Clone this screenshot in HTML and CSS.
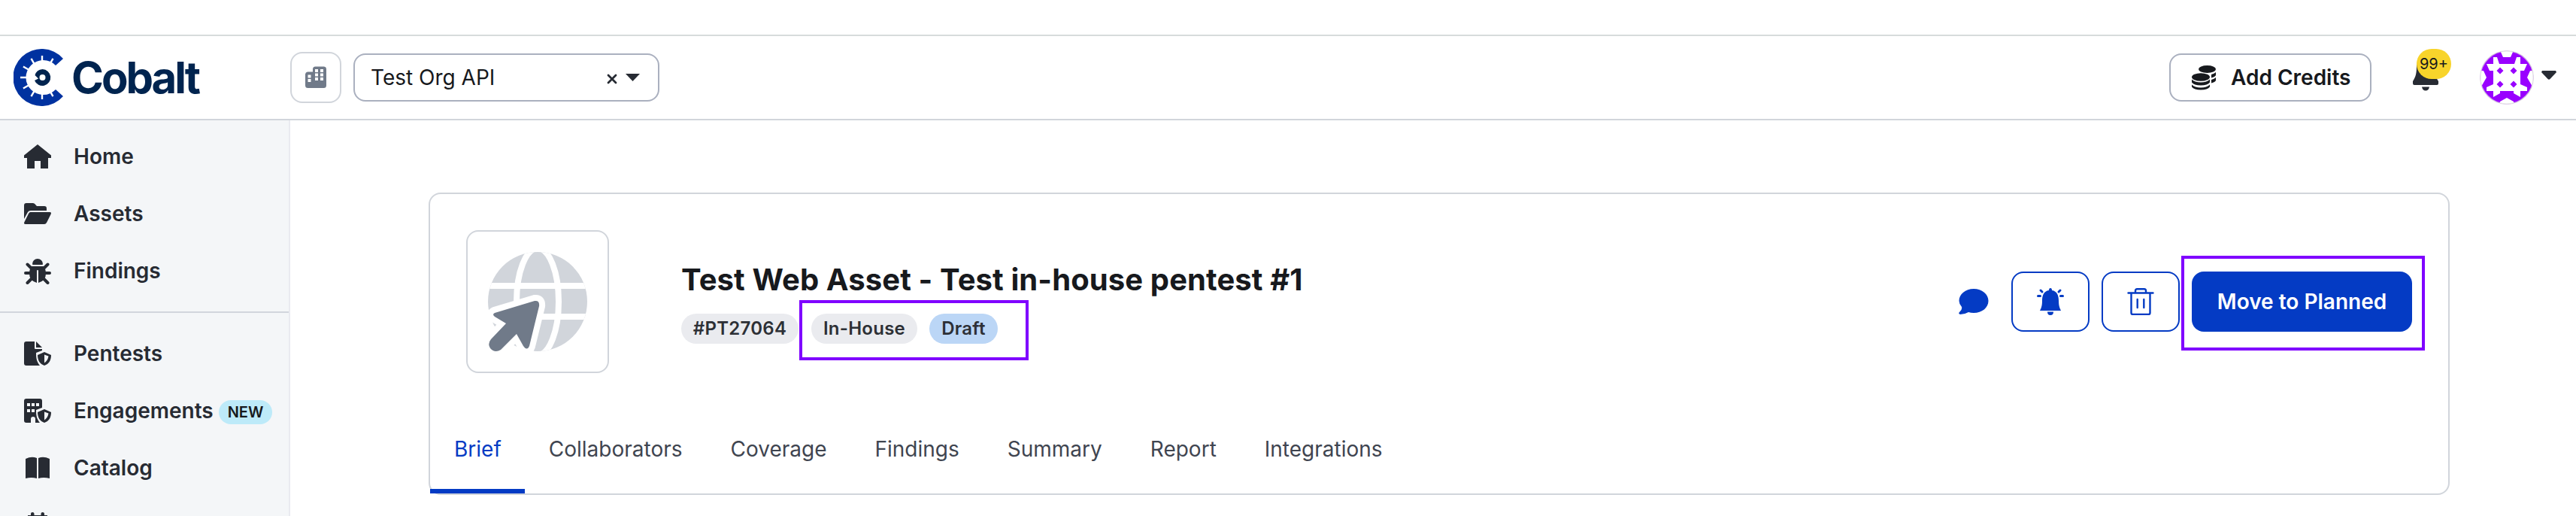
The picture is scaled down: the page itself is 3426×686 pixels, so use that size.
FILE: index.html
```html
<!DOCTYPE html>
<html lang="en">
<head>
<meta charset="utf-8">
<title>Cobalt</title>
<link rel="stylesheet" href="styles.css">
</head>
<body>
<header class="topbar">
  <a class="logo">
    <svg class="logo-mark" viewBox="0 0 76 76">
      <path d="M66 13A38 38 0 1 0 66 63L56 54A23 23 0 1 1 56 22Z" fill="#0032a0"/>
      <g stroke="#fff" stroke-width="2.4"><path d="M38 9v10M38 57v10M9 38h10M23.500 12.900l4 7M52.500 12.900l-4 7M12.900 23.500l7 4M12.900 52.500l7-4M23.500 63.100l4-7M52.500 63.100l-4-7"/></g>
      <path fill="#00244f" fill-rule="evenodd" d="M38.500 27a11 11 0 1 1-10.500 15l5-2.500-2.500-2.500-2-2A11 11 0 0 1 38.500 27Zm0 7a4 4 0 1 0 0 8 4 4 0 0 0 0-8Z"/>
    </svg>
    <span class="logo-text">Cobalt</span>
  </a>
  <div class="org-button">
    <svg width="30" height="30" viewBox="0 0 30 30"><path fill="#707a89" d="M4 7.500h7V4a3.500 3.500 0 0 1 3.500-3.500H26A3.500 3.500 0 0 1 29 4v21.500a3.500 3.500 0 0 1-3.500 3.500h-21A3.500 3.500 0 0 1 1 25.500v-15A3.500 3.500 0 0 1 4 7.500Z"/><path fill="#fff" d="M14 4h4v4h-4zM21 4h4v4h-4zM14 9.500h4v4h-4zM21 9.500h4v4h-4zM14 15h4v4h-4zM21 15h4v4h-4zM4.500 11.500h4v4h-4zM4.500 17h4v4h-4z"/></svg>
  </div>
  <div class="select">
    <span class="select-value">Test Org API</span>
    <svg class="select-clear" viewBox="0 0 14 14"><path d="M2 2l10 10M12 2L2 12" stroke="#272b33" stroke-width="2.800" stroke-linecap="round"/></svg>
    <svg class="select-caret" viewBox="0 0 19 10"><path d="M0 0h19L9.500 10z" fill="#272b33"/></svg>
  </div>
  <div class="credits">
    <svg width="32" height="34" viewBox="0 0 32 34" fill="#17191d"><ellipse cx="20.500" cy="6" rx="11.500" ry="5"/><path d="M26 13q4-1 6-3v4q-1 2-6 3.500zM26 20q4-1 6-3v4q-1 2-6 3.500z"/><ellipse cx="12" cy="16.500" rx="12" ry="5.300"/><path d="M0 19.500q4 4 12 4t12-4v4q-3 4-12 4t-12-4zM0 26.500q4 4 12 4t12-4v3q-3 4-12 4t-12-4z"/></svg>
    <span>Add Credits</span>
  </div>
  <div class="notif">
    <svg width="34" height="48" viewBox="0 0 34 48" fill="#272b33"><path d="M17 0c8 2 12 8 12 15 0 9 1 14 5 20v3q0 2-2 2H2q-2 0-2-2v-3C4 29 5 24 5 15 5 8 9 2 17 0ZM12 42.500h10q-1 5-5 5t-5-5Z"/></svg>
    <span class="notif-count">99+</span>
  </div>
  <svg class="avatar" viewBox="0 0 72 72">
    <defs><clipPath id="round"><circle cx="36" cy="36" r="35.500"/></clipPath></defs>
    <g clip-path="url(#round)">
      <path fill="#90f" d="M0 0h72v72H0z"/>
      <path fill="#fff" d="M9 18h9V9h5l3 9h20l3-9h5v9h9l-4 9h-5v18l9 4v5h-9v8l-9-5v-3H27v3l-9 5v-8H9v-5l9-4V27h-5z"/>
      <path fill="#fff" d="M27 0h18l-4 9H31zM26 72l1-4 9-5 9 5 1 4zM0 27h5l4 9-7 12H0zM72 27h-5l-4 9 7 12h2z"/>
      <path fill="#90f" d="M27 22.500l4.500 4.500-4.500 4.500-4.500-4.500zM45 22.500l4.500 4.500-4.500 4.500-4.500-4.500zM27 40.500l4.500 4.500-4.500 4.500-4.500-4.500zM45 40.500l4.500 4.500-4.500 4.500-4.500-4.500z"/>
    </g>
    <circle cx="36" cy="36" r="35.200" fill="none" stroke="#ddd" stroke-opacity=".7" stroke-width="1.500"/>
  </svg>
  <svg class="user-caret" viewBox="0 0 20 12"><path d="M1 0h18l1 2-8.500 9q-1.500 1.500-3 0L0 2z" fill="#272b33"/></svg>
</header>
<div class="body">
  <nav class="sidebar">
    <div class="nav-group">
      <a class="nav-item"><svg class="nav-icon" viewBox="0 0 36 36"><path d="M18 2L36 16.500V20h-4v14H22V24h-8v10H4V20H0v-3.500z"/></svg><span>Home</span></a>
      <a class="nav-item"><svg class="nav-icon" viewBox="0 0 36 36"><path d="M0 25V7q0-3 3-3h9q2 0 4 3l1 1h10q3 0 3 3v3H9q-3 0-4 2zM8.500 16H34q3 0 1.500 3L30 30q-1 2-3 2H2q-3 0-1.500-3L6 18q1-2 2.500-2Z"/></svg><span>Assets</span></a>
      <a class="nav-item"><svg class="nav-icon" viewBox="0 0 36 36"><path d="M11 9a7 7 0 0 1 14 0q0 1-1 1H12q-1 0-1-1Z"/><path d="M10 12h16q3 4 3 10 0 9-10 12V18q0-1-1-1t-1 1v16Q7 31 7 22q0-6 3-10Z"/><path d="M4.500 9.500L10 15M31.500 9.500L26 15M2 21h7M34 21h-7M4.500 34l6-6M31.500 34l-6-6" stroke="#272b33" stroke-width="4" stroke-linecap="round"/></svg><span>Findings</span></a>
    </div>
    <div class="nav-group">
      <a class="nav-item"><svg class="nav-icon" viewBox="0 0 36 36"><path d="M3 2h11v9q0 1 1 1h9v2l-8 3c0 8 1 12 5 17H3q-3 0-3-3V5q0-3 3-3ZM16 2l8 8h-8z"/><path fill-rule="evenodd" d="M27 16l9 4c0 7-3 12-9 14-6-2-9-7-9-14zm0 3.500v11c3-2 5-5 5.500-9z"/></svg><span>Pentests</span></a>
      <a class="nav-item"><svg class="nav-icon" viewBox="0 0 36 36"><path d="M3 2h18q3 0 3 3v9l-8 3c0 8 1 12 5 17h-6v-5q0-3-3-3t-3 3v5H3q-3 0-3-3V5q0-3 3-3Z"/><path fill="#f4f6f8" d="M4 8h4v4H4zM10 8h4v4h-4zM16 8h4v4h-4zM4 16h4v4H4zM10 16h4v4h-4z"/><path fill-rule="evenodd" d="M27 16l9 4c0 7-3 12-9 14-6-2-9-7-9-14zm0 3.500v11c3-2 5-5 5.500-9z"/></svg><span>Engagements</span><b class="new">NEW</b></a>
      <a class="nav-item"><svg class="nav-icon" viewBox="0 0 36 36"><path d="M2 6q8-4 15-1v27q-7-2-15 0zM19 5q7-3 15 1v26q-8-2-15 0z"/></svg><span>Catalog</span></a>
      <a class="nav-item"><svg class="nav-icon" viewBox="0 0 36 36"><path d="M5 5h26v28H5zM9 7V3q0-2 2.200-2t2.300 2v4zM22.500 7V3q0-2 2.200-2t2.300 2v4z"/></svg></a>
    </div>
  </nav>
  <main class="main">
    <section class="card">
      <div class="summary">
        <div class="thumb">
          <svg width="132" height="134" viewBox="0 0 132 134">
            <defs><clipPath id="globe"><circle cx="66" cy="67" r="66"/></clipPath></defs>
            <circle cx="66" cy="67" r="66" fill="#d1d5db"/>
            <g clip-path="url(#globe)" fill="none" stroke="#fff" stroke-width="8"><path d="M0 46h132M0 87h132"/><ellipse cx="66" cy="67" rx="28" ry="71"/></g>
            <path d="M9 82L62 66q7-1 6 7L55 126q-3 7-8 0l-9-16-21 21q-8 5-14-2-4-6 1-12l20-21L9 87q-4-3 0-5Z" fill="#707a89" stroke="#fff" stroke-width="16" paint-order="stroke"/>
          </svg>
        </div>
        <div class="heading">
          <h1>Test Web Asset - Test in-house pentest #1</h1>
          <div class="chips"><span class="chip id">#PT27064</span><span class="chip house">In-House</span><span class="chip draft">Draft</span><i class="mark mark-chips"></i></div>
        </div>
        <div class="actions">
          <svg class="comment" viewBox="0 0 40 36"><path fill="#043bc4" d="M20 1c11 0 19.500 7 19.500 16S31 33 20 33q-4 0-7-1-5 3-11 3-3-1-1-3 4-3 3-7Q.5 21 .5 17C.5 8 9 1 20 1Z"/></svg>
          <div class="icon-button"><svg width="36" height="36" viewBox="0 0 36 36" fill="#043bc4"><path d="M18 0q2 0 2 3c7 1 9 7 9 14 0 6 1 9 3 13H4c2-4 3-7 3-13C7 10 9 4 16 3q0-3 2-3ZM14 31.500h8q0 4.500-4 4.500t-4-4.500Z"/><path d="M5 3l2 2M31 3l-2 2M1.500 10.500h3M31.500 10.500h3" stroke="#043bc4" stroke-width="3" stroke-linecap="round"/></svg></div>
          <div class="icon-button"><svg width="36" height="36" viewBox="0 0 36 36" fill="none" stroke="#043bc4" stroke-width="2.400" stroke-linecap="round"><path d="M1.500 6.500h33M5.500 7v26q0 2 2 2h21q2 0 2-2V7M11 6V3.500Q11 1.200 13.300 1.200h9.400Q25 1.200 25 3.500V6M13.700 15v11M22.300 15v11"/></svg></div>
          <div class="primary">Move to Planned<i class="mark mark-primary"></i></div>
        </div>
      </div>
      <div class="tabs"><a class="tab active">Brief</a><a class="tab">Collaborators</a><a class="tab">Coverage</a><a class="tab">Findings</a><a class="tab">Summary</a><a class="tab">Report</a><a class="tab">Integrations</a></div>
    </section>
  </main>
</div>
</body>
</html>
```
FILE: styles.css
```css
* { box-sizing: border-box; }
body { margin: 0; height: 686px; overflow: hidden; padding-top: 46px; background: #fff; color: #17191d; font: 28px/36px Inter, sans-serif; }
svg { display: block; flex: none; }
.topbar { display: flex; align-items: center; height: 114px; border-top: 2px solid #d7dbdb; border-bottom: 2px solid #d1d5db; }
.logo { display: flex; align-items: center; width: 368px; margin-left: 18px; flex: none; }
.logo-mark { width: 76px; height: 76px; }
.logo-text { margin-left: 1px; font-size: 58px; line-height: 76px; font-weight: 700; letter-spacing: -3px; color: #00244f; }
.org-button { display: flex; align-items: center; justify-content: center; width: 68px; height: 68px; border: 2px solid #d1d5db; border-radius: 16px; }
.select { display: flex; align-items: center; width: 407px; height: 64px; margin-left: 16px; padding: 0 24px 0 21px; border: 2px solid #aab0bf; border-radius: 16px; }
.select-value { flex: 1; }
.select-clear { width: 14px; height: 14px; margin: 3px 11px 0 0; }
.select-caret { width: 19px; height: 10px; }
.credits { display: flex; align-items: center; gap: 20px; width: 269px; height: 64px; margin-left: auto; padding-left: 28px; border: 2px solid #aab0bf; border-radius: 16px; font-weight: 600; white-space: nowrap; }
.notif { position: relative; margin: 0 0 12px 55px; }
.notif-count { position: absolute; left: 5px; top: -8px; width: 46px; height: 40px; border-radius: 20px; background: #f8d42b; font-size: 20px; line-height: 40px; text-align: center; }
.avatar { width: 72px; height: 72px; margin-left: 55px; }
.user-caret { width: 20px; height: 12px; margin: 0 26px 6px 10px; }
.body { display: flex; height: 526px; }
.sidebar { width: 386px; flex: none; background: #f4f6f8; border-right: 2px solid #e9eaf0; color: #272b33; font-weight: 600; overflow: hidden; }
.nav-group { padding-top: 10px; }
.nav-group + .nav-group { margin-top: 16px; border-top: 2px solid #d1d5dd; padding-top: 16px; }
.nav-item { display: flex; align-items: center; height: 76px; padding-left: 32px; }
.nav-icon { width: 36px; height: 36px; margin-right: 30px; fill: #272b33; }
.new { height: 32px; margin: 4px 0 0 7px; padding: 0 12px; border-radius: 16px; background: #bdeaf9; color: #17191d; font-size: 20px; line-height: 32px; font-weight: 600; }
.main { flex: 1; padding: 96px 168px 0 184px; }
.card { height: 402px; border: 2px solid #d1d5db; border-radius: 16px; }
.summary { display: flex; height: 286px; padding: 48px 48px 0; }
.thumb { display: flex; align-items: center; justify-content: center; width: 190px; height: 190px; border: 2px solid #d1d5db; border-radius: 16px; }
.heading { margin: 40px 0 0 96px; }
h1 { margin: 0; font-size: 40px; line-height: 52px; font-weight: 700; letter-spacing: .1px; white-space: nowrap; }
.chips { position: relative; display: flex; margin-top: 19px; }
.chip { height: 40px; border-radius: 20px; background: #eaebef; color: #2d3036; font-size: 24px; line-height: 40px; font-weight: 600; letter-spacing: .25px; text-align: center; }
.id { width: 156px; }
.house { width: 141px; margin-left: 17px; }
.draft { width: 91px; margin-left: 16px; background: #bbd6f6; }
.mark { position: absolute; border: 4px solid #7f00ff; }
.mark-chips { left: 157px; top: -18px; width: 305px; height: 80px; }
.actions { display: flex; align-items: center; height: 80px; margin: 55px 0 0 auto; }
.comment { width: 40px; height: 36px; margin-right: 30px; }
.icon-button { display: flex; align-items: center; justify-content: center; width: 104px; height: 80px; margin-right: 16px; border: 2px solid #043bc4; border-radius: 16px; }
.primary { position: relative; width: 293px; height: 80px; border-radius: 16px; background: #043bc4; color: #fff; font-weight: 600; line-height: 80px; text-align: center; }
.mark-primary { left: -14px; top: -21px; width: 324px; height: 126px; }
.tabs { display: flex; height: 112px; color: #3f4550; }
.tab { padding: 35px 32px 0; border-bottom: 6px solid transparent; }
.active { padding-right: 31px; color: #043bc4; border-color: #043bc4; }
```
